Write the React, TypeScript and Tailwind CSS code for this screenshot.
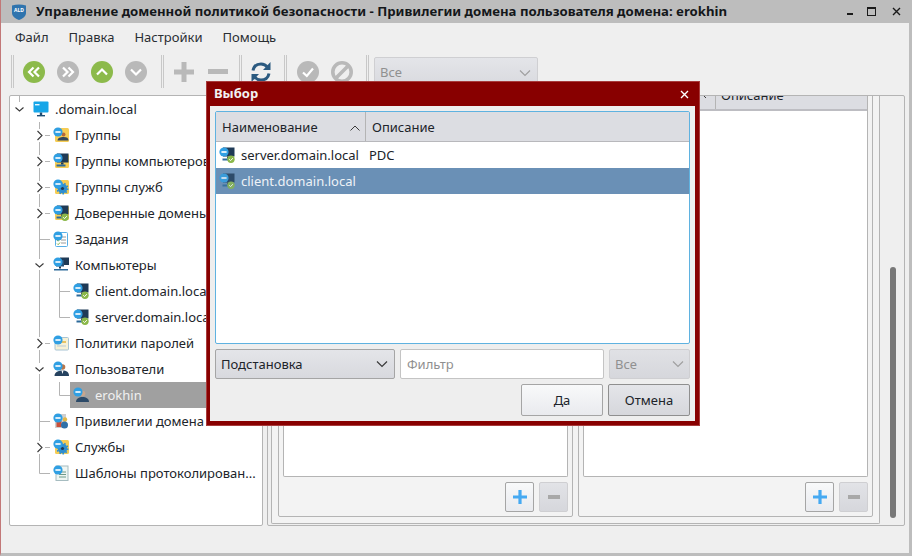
import React from 'react';

type GuideKind = 'none' | 'line' | 'tee' | 'corner' | 'closed' | 'open' | 'rootOpen';

const LINE = '#b4b4b4';

const Guide: React.FC<{ kind: GuideKind }> = ({ kind }) => (
  <svg width="20" height="26" className="shrink-0" fill="none">
    {kind === 'line' && <path d="M9.5 0V26" stroke={LINE} />}
    {kind === 'tee' && <path d="M9.5 0V26M9.5 13.5H20" stroke={LINE} />}
    {kind === 'corner' && <path d="M9.5 0V13.5H20" stroke={LINE} />}
    {kind === 'closed' && (
      <>
        <path d="M9.5 0V7M9.5 20V26M15 13.5H20" stroke={LINE} />
        <path d="M7.5 9L12 13.5L7.5 18" stroke="#3a3a3a" strokeWidth="1.1" />
      </>
    )}
    {kind === 'open' && (
      <>
        <path d="M9.5 0V7M9.5 18V26" stroke={LINE} />
        <path d="M5.5 11.5L9.5 15L13.5 11.5" stroke="#3a3a3a" strokeWidth="1.1" />
      </>
    )}
    {kind === 'rootOpen' && (
      <>
        <path d="M9.5 0V6" stroke={LINE} />
        <path d="M5.5 11.5L9.5 15L13.5 11.5" stroke="#3a3a3a" strokeWidth="1.1" />
      </>
    )}
  </svg>
);

const Badge = () => (
  <>
    <circle cx="5" cy="5" r="4.6" fill="#2f9fe3" />
    <rect x="2.4" y="4.2" width="5.2" height="1.6" fill="#ffffff" />
  </>
);

const Check = () => (
  <>
    <circle cx="12" cy="12.3" r="3.7" fill="#8bb84a" />
    <path d="M10.2 12.3L11.6 13.6L13.8 11.2" stroke="#ffffff" strokeWidth="1" fill="none" />
  </>
);

const Monitor = () => (
  <>
    <rect x="4" y="0.5" width="11.5" height="9" fill="#1f3a56" />
    <rect x="8" y="9.5" width="2.5" height="2" fill="#1f3a56" />
    <rect x="3.5" y="11.5" width="9" height="2" fill="#2c6a9a" />
  </>
);

const Gear = () => (
  <>
    <circle cx="9.5" cy="9.5" r="4.8" fill="#2f8fd0" />
    <circle cx="9.5" cy="9.5" r="5.2" fill="none" stroke="#2f8fd0" strokeWidth="1.6" strokeDasharray="1.6 1.6" />
    <circle cx="9.5" cy="9.5" r="1.6" fill="#1f3a56" />
  </>
);

const Yellow = () => <rect x="2" y="1" width="14" height="14" rx="1.5" fill="#f6cd55" />;

const TreeIcon: React.FC<{ kind: string }> = ({ kind }) => (
  <svg width="16" height="16" viewBox="0 0 16 16" className="shrink-0">
    {kind === 'root' && (
      <>
        <rect x="0.5" y="0.5" width="15" height="11" rx="1" fill="#17a6e8" />
        <rect x="2" y="3" width="4.5" height="1.4" fill="#e8f7ff" />
        <rect x="6.8" y="11.5" width="2.4" height="2.5" fill="#1f4e74" />
        <rect x="4" y="14" width="8" height="1.4" fill="#1f4e74" />
      </>
    )}
    {kind === 'group' && (
      <>
        <Yellow />
        <circle cx="10.5" cy="7.5" r="2" fill="#b5683a" />
        <path d="M4.5 13.5C4.5 11 7 10 10.5 10S15.5 11 15.5 13.5Z" fill="#33475c" />
        <Badge />
      </>
    )}
    {kind === 'groupPc' && (
      <>
        <Yellow />
        <Monitor />
        <Badge />
      </>
    )}
    {kind === 'groupSvc' && (
      <>
        <Yellow />
        <Gear />
        <Badge />
      </>
    )}
    {kind === 'trusted' && (
      <>
        <Yellow />
        <Monitor />
        <Badge />
        <Check />
      </>
    )}
    {kind === 'tasks' && (
      <>
        <rect x="2.5" y="1.5" width="12" height="14" rx="1" fill="#ffffff" stroke="#58aee6" />
        <path d="M8 6H13M8 9H13M8 12H13" stroke="#9a9a9a" />
        <path d="M4 9L5.2 10.2L7 8M4 12.5L5.2 13.7L7 11.5" stroke="#8bb84a" fill="none" />
        <Badge />
      </>
    )}
    {kind === 'pcs' && (
      <>
        <rect x="7" y="0.5" width="9" height="7.5" fill="#1f3a56" />
        <rect x="3" y="3" width="8" height="6.5" fill="#24527a" />
        <rect x="6" y="9.5" width="2" height="2" fill="#1f3a56" />
        <rect x="1" y="12" width="14" height="1.5" fill="#2c6a9a" />
        <Badge />
      </>
    )}
    {kind === 'pc' && (
      <>
        <Monitor />
        <Badge />
        <Check />
      </>
    )}
    {kind === 'policy' && (
      <>
        <rect x="2" y="2.5" width="13.5" height="12.5" rx="1" fill="#f6f1d6" stroke="#a8c4d4" />
        <path d="M7 7H13" stroke="#e4b845" strokeWidth="1.6" />
        <path d="M4 11H13" stroke="#b9c9d4" />
        <Badge />
      </>
    )}
    {kind === 'users' && (
      <>
        <circle cx="9.5" cy="6" r="2.8" fill="#b9764a" />
        <path d="M1.5 15C1.5 11 5.5 9.5 9.5 9.5S16 11 16 15Z" fill="#25425f" />
        <path d="M8.5 9.5L9.5 13L10.5 9.5Z" fill="#ffffff" />
        <Badge />
      </>
    )}
    {kind === 'user' && (
      <>
        <circle cx="9.5" cy="6.5" r="2.8" fill="#c9a58c" />
        <path d="M3 15C3 11.5 6 10 9.5 10S16 11.5 16 15Z" fill="#2c4a68" />
        <Badge />
      </>
    )}
    {kind === 'priv' && (
      <>
        <rect x="2" y="1" width="11" height="14" fill="#cfcfcf" />
        <rect x="3.5" y="8" width="5" height="6" fill="#c9503a" />
        <circle cx="12" cy="6.5" r="2.2" fill="#e4b845" />
        <circle cx="11.5" cy="12" r="3.5" fill="#2f70a8" />
        <Badge />
      </>
    )}
    {kind === 'svc' && (
      <>
        <Yellow />
        <Gear />
        <Badge />
      </>
    )}
    {kind === 'log' && (
      <>
        <rect x="3" y="1" width="12" height="14.5" fill="#eef5f2" stroke="#a6bcc0" />
        <path d="M6 7H13M6 9.5H13M6 12H13" stroke="#6f9a8a" />
        <Badge />
      </>
    )}
  </svg>
);

const treeRows: { guides: GuideKind[]; icon: string; label: string; selected?: boolean }[] = [
  { guides: ['rootOpen'], icon: 'root', label: '.domain.local' },
  { guides: ['none', 'closed'], icon: 'group', label: 'Группы' },
  { guides: ['none', 'closed'], icon: 'groupPc', label: 'Группы компьютеров' },
  { guides: ['none', 'closed'], icon: 'groupSvc', label: 'Группы служб' },
  { guides: ['none', 'closed'], icon: 'trusted', label: 'Доверенные домены' },
  { guides: ['none', 'tee'], icon: 'tasks', label: 'Задания' },
  { guides: ['none', 'open'], icon: 'pcs', label: 'Компьютеры' },
  { guides: ['none', 'line', 'tee'], icon: 'pc', label: 'client.domain.local' },
  { guides: ['none', 'line', 'corner'], icon: 'pc', label: 'server.domain.local' },
  { guides: ['none', 'closed'], icon: 'policy', label: 'Политики паролей' },
  { guides: ['none', 'open'], icon: 'users', label: 'Пользователи' },
  { guides: ['none', 'line', 'corner'], icon: 'user', label: 'erokhin', selected: true },
  { guides: ['none', 'tee'], icon: 'priv', label: 'Привилегии домена' },
  { guides: ['none', 'closed'], icon: 'svc', label: 'Службы' },
  { guides: ['none', 'corner'], icon: 'log', label: 'Шаблоны протоколирован...' },
];

const Handle = () => (
  <div className="flex h-[33px] shrink-0 gap-px">
    <div className="w-px bg-[#c8c8c8]" />
    <div className="w-px bg-[#c8c8c8]" />
  </div>
);

const RoundIcon: React.FC<{ color: string; d: string }> = ({ color, d }) => (
  <svg width="22" height="22" viewBox="0 0 22 22" className="shrink-0">
    <circle cx="11" cy="11" r="11" fill={color} />
    <path d={d} fill="none" stroke="#ffffff" strokeWidth="2.2" />
  </svg>
);

const ChevronDown: React.FC<{ color: string }> = ({ color }) => (
  <svg width="14" height="8" viewBox="0 0 14 8" fill="none" className="shrink-0">
    <path d="M2 1.5L7 6.5L12 1.5" stroke={color} strokeWidth="1.2" />
  </svg>
);

const SmallPlus = () => (
  <svg width="14" height="14" viewBox="0 0 14 14">
    <path d="M7 0V14M0 7H14" stroke="#45a9f2" strokeWidth="3.2" />
  </svg>
);

const SmallMinus = () => (
  <svg width="12" height="4" viewBox="0 0 12 4">
    <rect width="12" height="4" fill="#a8a8a8" />
  </svg>
);

const GroupBox = () => (
  <div className="flex w-[295px] flex-col rounded-[2px] border border-[#b4b4b4] px-[4px] pb-[4px]">
    <div className="flex min-h-0 flex-1 flex-col rounded-b-[2px] border-x border-b border-[#b4b4b4] bg-white">
      <div className="flex h-[29px] shrink-0 border-b-2 border-[#bdbdc2] bg-[#dcdde2] text-[13px]">
        <div className="flex w-[132px] items-center justify-end border-r border-[#b4b4b4] pr-[8px]">
          <svg width="12" height="7" viewBox="0 0 12 7" fill="none">
            <path d="M1 6L6 1L11 6" stroke="#3a3a3a" />
          </svg>
        </div>
        <div className="flex flex-1 items-center pl-[5px] text-[#20242a]">Описание</div>
      </div>
    </div>
    <div className="flex shrink-0 justify-end gap-[5px] pt-[5px]">
      <div className="flex h-[30px] w-[29px] items-center justify-center rounded-[2px] border border-[#a5a5a5] bg-linear-to-b from-[#f8f9fa] to-[#e9eaee]">
        <SmallPlus />
      </div>
      <div className="flex h-[30px] w-[29px] items-center justify-center rounded-[2px] border border-[#cfcfd2] bg-linear-to-b from-[#e2e3e7] to-[#d6d7dc]">
        <SmallMinus />
      </div>
    </div>
  </div>
);

const Dialog = () => (
  <div className="absolute top-[81px] left-[205px] flex h-[345px] w-[494px] flex-col border border-[#a83c3c] bg-[#880000]">
    <div className="flex h-[24px] shrink-0 items-center justify-between pr-[10px] pl-[7px] text-[13px] font-bold text-[#f2f2f2]">
      <span>Выбор</span>
      <svg width="9" height="9" viewBox="0 0 9 9" fill="none">
        <path d="M1 1L8 8M8 1L1 8" stroke="#ffffff" strokeWidth="1.4" />
      </svg>
    </div>
    <div className="mr-[4px] mb-[4px] ml-[3px] flex min-h-0 flex-1 flex-col gap-[5px] bg-[#eeeeee] p-[5px] text-[13px]">
      <div className="flex min-h-0 flex-1 flex-col rounded-[2px] border border-[#5fb2e0] bg-white">
        <div className="flex h-[30px] shrink-0 border-b border-[#b8b8bc] bg-[#dcdde2] text-[#20242a]">
          <div className="flex w-[150px] items-center justify-between border-r border-[#b4b4b4] pt-[2px] pr-[5px] pl-[6px]">
            <span>Наименование</span>
            <svg width="10" height="6" viewBox="0 0 10 6" fill="none">
              <path d="M0.5 5.5L5 1L9.5 5.5" stroke="#3a3a3a" />
            </svg>
          </div>
          <div className="flex flex-1 items-center pt-[2px] pl-[6px]">Описание</div>
        </div>
        <div className="flex h-[26px] shrink-0 items-center pl-[3px] text-[#20242a]">
          <TreeIcon kind="pc" />
          <span className="ml-[6px] w-[128px] pt-[2px]">server.domain.local</span>
          <span className="pt-[2px]">PDC</span>
        </div>
        <div className="flex h-[26px] shrink-0 items-center bg-[#6a90b6] pl-[3px] text-[#eef2f6]">
          <div className="opacity-80">
            <TreeIcon kind="pc" />
          </div>
          <span className="ml-[6px] pt-[2px]">client.domain.local</span>
        </div>
      </div>
      <div className="flex h-[30px] shrink-0 gap-[5px]">
        <div className="flex w-[180px] items-center justify-between rounded-[2px] border border-[#a5a5a5] bg-linear-to-b from-[#e4e5e9] to-[#d8d9de] pr-[5px] pl-[5px] text-[#20242a]">
          <span className="pt-[2px]">Подстановка</span>
          <ChevronDown color="#3a3a3a" />
        </div>
        <div className="flex w-[204px] items-center rounded-[2px] border border-[#c4c4c4] bg-white pt-[2px] pl-[6px] text-[#8f8f8f]">
          Фильтр
        </div>
        <div className="flex flex-1 items-center justify-between rounded-[2px] border border-[#cfcfd2] bg-linear-to-b from-[#e0e1e5] to-[#d6d7dc] pr-[4px] pl-[5px] text-[#909090]">
          <span className="pt-[2px]">Все</span>
          <ChevronDown color="#a0a0a0" />
        </div>
      </div>
      <div className="flex h-[32px] shrink-0 justify-end gap-[5px] text-[#20242a]">
        <div className="flex w-[82px] items-center justify-center rounded-[2px] border border-[#a5a5a5] bg-linear-to-b from-[#f8f9fa] to-[#e9eaee] pt-[2px]">
          Да
        </div>
        <div className="flex w-[82px] items-center justify-center rounded-[2px] border border-[#8f8f8f] bg-linear-to-b from-[#e4e5e9] to-[#d6d7dc] pt-[2px]">
          Отмена
        </div>
      </div>
    </div>
  </div>
);

export default function App() {
  return (
    <div className="relative flex h-[556px] w-[912px] flex-col overflow-hidden border-r-[3px] border-b-[3px] border-l border-[#bdbdbd] border-l-[#c27878] bg-[#efefef] font-['Noto_Sans',sans-serif] text-[13px] text-[#20242a]">
      <div className="flex h-[23px] shrink-0 items-center bg-[#bdbdbd] pl-[11px]">
        <svg width="14" height="16" viewBox="0 0 14 16" className="shrink-0">
          <path d="M0 1.5Q7 -0.5 14 1.5V9C14 12.5 10 15 7 16C4 15 0 12.5 0 9Z" fill="#2f74ae" />
          <text x="7" y="7.5" textAnchor="middle" fontSize="5" fontWeight="700" fill="#ffffff">
            ALD
          </text>
        </svg>
        <span className="ml-[10px] text-[13.2px] font-bold whitespace-nowrap text-[#14171a]">
          Управление доменной политикой безопасности - Привилегии домена пользователя домена: erokhin
        </span>
        <div className="ml-auto flex items-center">
          <div className="mt-[5px] mr-[14px] h-[2px] w-[6px] bg-[#1a1a1a]" />
          <div className="mr-[16px] h-[9px] w-[9px] border-[1.5px] border-t-2 border-[#1a1a1a]" />
          <svg width="9" height="9" viewBox="0 0 9 9" fill="none" className="mr-[8px]">
            <path d="M1 1L8 8M8 1L1 8" stroke="#1a1a1a" strokeWidth="1.4" />
          </svg>
        </div>
      </div>

      <div className="flex h-[29px] shrink-0 items-center pl-[4px] text-[#2a2e33]">
        <span className="px-[10px]">Файл</span>
        <span className="px-[10px]">Правка</span>
        <span className="px-[10px]">Настройки</span>
        <span className="px-[10px]">Помощь</span>
      </div>

      <div className="flex h-[43px] shrink-0 items-start pt-[3px] pl-[10px]">
        <Handle />
        <div className="mt-[6px] ml-[9px] flex gap-[12px]">
          <RoundIcon color="#8cba4b" d="M10.5 6.5L6 11L10.5 15.5M16 6.5L11.5 11L16 15.5" />
          <RoundIcon color="#b9b9b9" d="M6 6.5L10.5 11L6 15.5M11.5 6.5L16 11L11.5 15.5" />
          <RoundIcon color="#8cba4b" d="M6 13.5L11 8.5L16 13.5" />
          <RoundIcon color="#b9b9b9" d="M6 8.5L11 13.5L16 8.5" />
        </div>
        <div className="ml-[14px]">
          <Handle />
        </div>
        <svg width="20" height="20" viewBox="0 0 20 20" className="mt-[7px] ml-[10px] shrink-0">
          <path d="M10 0V20M0 10H20" stroke="#b9b9b9" strokeWidth="5" />
        </svg>
        <svg width="20" height="5" viewBox="0 0 20 5" className="mt-[14px] ml-[14px] shrink-0">
          <rect width="20" height="5" fill="#b9b9b9" />
        </svg>
        <div className="ml-[11px]">
          <Handle />
        </div>
        <svg width="22" height="24" viewBox="0 0 22 24" fill="none" className="mt-[5px] ml-[8px] shrink-0">
          <path d="M3 10.5C3.8 6.5 7 4 11 4C13.8 4 16 5.2 17.5 7.2" stroke="#2b5a80" strokeWidth="3" />
          <path d="M20.5 2V10H13Z" fill="#2b5a80" />
          <path d="M19 13.5C18.2 17.5 15 20 11 20C8.2 20 6 18.8 4.5 16.8" stroke="#2b5a80" strokeWidth="3" />
          <path d="M1.5 22V14H9Z" fill="#2b5a80" />
        </svg>
        <div className="ml-[12px]">
          <Handle />
        </div>
        <div className="mt-[6px] ml-[10px] flex gap-[12px]">
          <RoundIcon color="#b9b9b9" d="M6 11.5L9.8 15L16 7.5" />
          <svg width="22" height="22" viewBox="0 0 22 22" fill="none" className="shrink-0">
            <circle cx="11" cy="11" r="9.2" stroke="#b9b9b9" strokeWidth="3.6" />
            <path d="M5 17L17 5" stroke="#b9b9b9" strokeWidth="3.6" />
          </svg>
        </div>
        <div className="ml-[13px]">
          <Handle />
        </div>
        <div className="mt-[2px] ml-[5px] flex h-[31px] w-[164px] items-center justify-between rounded-[2px] border border-[#cfcfd2] bg-linear-to-b from-[#e4e5e9] to-[#d8d9de] pr-[5px] pl-[5px] text-[#909090]">
          <span>Все</span>
          <ChevronDown color="#a0a0a0" />
        </div>
      </div>

      <div className="flex h-[431px] shrink-0 gap-[4px] pl-[8px]">
        <div className="flex w-[254px] shrink-0 flex-col overflow-hidden rounded-[2px] border border-[#b4b4b4] bg-white">
          {treeRows.map((row) => (
            <div key={row.label} className="flex h-[26px] shrink-0">
              {row.guides.map((g, i) => (
                <Guide key={i} kind={g} />
              ))}
              <div
                className={`flex min-w-0 flex-1 items-center pl-[3px] ${
                  row.selected ? 'bg-[#a0a0a0] text-[#f0f0f0]' : 'text-[#20242a]'
                }`}
              >
                <TreeIcon kind={row.icon} />
                <span className="ml-[6px] pt-[2px] whitespace-nowrap">{row.label}</span>
              </div>
            </div>
          ))}
        </div>

        <div className="flex w-[638px] shrink-0 overflow-hidden rounded-[2px] border border-[#b4b4b4] pl-[3px]">
          <div className="mb-[1px] flex w-[609px] shrink-0 gap-[5px] overflow-hidden rounded-b-[2px] border-x border-b border-[#b4b4b4] bg-[#f3f3f3] px-[6px] pb-[6px]">
            <div className="-mt-[15px] flex gap-[5px]">
              <GroupBox />
              <GroupBox />
            </div>
          </div>
          <div className="flex flex-1 flex-col items-center pt-[171px] pb-[7px] pl-[1px]">
            <div className="w-[6px] flex-1 rounded-[3px] bg-[#787878]" />
          </div>
        </div>
      </div>

      <Dialog />
    </div>
  );
}
